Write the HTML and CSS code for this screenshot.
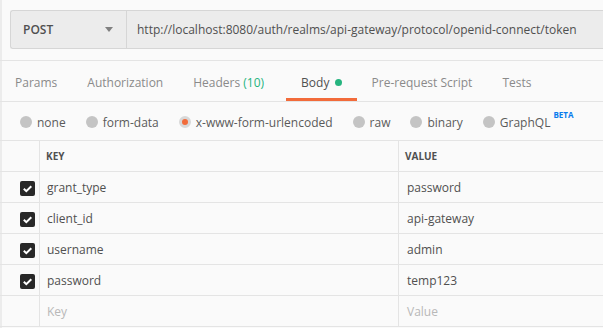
FILE: index.html
```html
<!DOCTYPE html>
<html lang="en">
<head>
    <meta charset="UTF-8">
    <title>Request</title>
    <link rel="stylesheet" href="styles.css">
</head>
<body>

<!-- Barra de la petición -->
<div class="request-bar">
    <div class="request-box">
        <div class="method">
            <span>POST</span>
            <span class="caret"></span>
        </div>
        <div class="url">http://localhost:8080/auth/realms/api-gateway/protocol/openid-connect/token</div>
    </div>
</div>

<!-- Pestañas -->
<div class="tabs">
    <div class="tab">Params</div>
    <div class="tab">Authorization</div>
    <div class="tab">Headers <span class="count">(10)</span></div>
    <div class="tab active">Body <span class="dot"></span></div>
    <div class="tab">Pre-request Script</div>
    <div class="tab">Tests</div>
</div>

<!-- Tipo de cuerpo -->
<div class="body-types">
    <label class="radio"><span class="circle"></span>none</label>
    <label class="radio"><span class="circle"></span>form-data</label>
    <label class="radio"><span class="circle selected"></span>x-www-form-urlencoded</label>
    <label class="radio"><span class="circle"></span>raw</label>
    <label class="radio"><span class="circle"></span>binary</label>
    <label class="radio"><span class="circle"></span>GraphQL<sup class="beta">BETA</sup></label>
</div>

<!-- Tabla de parámetros -->
<div class="params">
    <div class="row head">
        <div class="cell check"></div>
        <div class="cell">KEY</div>
        <div class="cell">VALUE</div>
    </div>
    <div class="row">
        <div class="cell check"><span class="box"><svg viewBox="0 0 15 15" width="15" height="15"><path d="M3.8 7.8l2.5 2.4 5-5" fill="none" stroke="#fff" stroke-width="2"/></svg></span></div>
        <div class="cell">grant_type</div>
        <div class="cell">password</div>
    </div>
    <div class="row">
        <div class="cell check"><span class="box"><svg viewBox="0 0 15 15" width="15" height="15"><path d="M3.8 7.8l2.5 2.4 5-5" fill="none" stroke="#fff" stroke-width="2"/></svg></span></div>
        <div class="cell">client_id</div>
        <div class="cell">api-gateway</div>
    </div>
    <div class="row">
        <div class="cell check"><span class="box"><svg viewBox="0 0 15 15" width="15" height="15"><path d="M3.8 7.8l2.5 2.4 5-5" fill="none" stroke="#fff" stroke-width="2"/></svg></span></div>
        <div class="cell">username</div>
        <div class="cell">admin</div>
    </div>
    <div class="row">
        <div class="cell check"><span class="box"><svg viewBox="0 0 15 15" width="15" height="15"><path d="M3.8 7.8l2.5 2.4 5-5" fill="none" stroke="#fff" stroke-width="2"/></svg></span></div>
        <div class="cell">password</div>
        <div class="cell">temp123</div>
    </div>
    <div class="row">
        <div class="cell check"></div>
        <div class="cell placeholder">Key</div>
        <div class="cell placeholder">Value</div>
    </div>
</div>

</body>
</html>
```

FILE: styles.css
```css
body {
    font-family: 'Open Sans', sans-serif;
    font-size: 12px;
    color: #505050;
    margin: 0;
    padding: 0;
    background-color: #fafafa;
    box-shadow: inset 2px 0 0 #ececec;
    min-height: 100vh;
}

/* Barra de la petición */
.request-bar {
    padding: 10px 0 11px 10px;
    border-bottom: 1px solid #e4e4e4;
}

.request-box {
    display: flex;
    height: 37px;
    background-color: #ececec;
    border: 1px solid #d6d6d6;
    border-right: none;
    border-radius: 3px 0 0 3px;
}

.method {
    flex-shrink: 0;
    width: 103px;
    padding-left: 12px;
    display: flex;
    align-items: center;
    justify-content: space-between;
    border-right: 1px solid #d6d6d6;
    font-weight: 600;
    color: #505050;
}

.caret {
    width: 0;
    height: 0;
    border-left: 4px solid transparent;
    border-right: 4px solid transparent;
    border-top: 5px solid #808080;
    margin-right: 13px;
}

.url {
    display: flex;
    align-items: center;
    padding-left: 10px;
    white-space: nowrap;
    color: #505050;
}

/* Pestañas */
.tabs {
    display: flex;
    border-bottom: 1px solid #e4e4e4;
}

.tab {
    height: 37px;
    padding: 0 15px;
    line-height: 44px;
    color: #8a8a8a;
    border-bottom: 3px solid transparent;
    white-space: nowrap;
}

.tab.active {
    color: #505050;
    border-bottom-color: #f26b3a;
    margin-left: 7px;
}

.count {
    color: #26b47f;
}

.dot {
    display: inline-block;
    width: 7px;
    height: 7px;
    border-radius: 50%;
    background-color: #26b47f;
    margin-left: 2px;
    vertical-align: 1px;
}

/* Tipo de cuerpo */
.body-types {
    display: flex;
    align-items: center;
    height: 38px;
    padding-left: 20px;
    gap: 20px;
}

.radio {
    display: flex;
    align-items: center;
    color: #5a5a5a;
    white-space: nowrap;
    position: relative;
    top: 1px;
}

.circle {
    width: 12px;
    height: 12px;
    border-radius: 50%;
    background-color: #c4c4c4;
    margin-right: 5px;
    box-sizing: border-box;
}

.circle.selected {
    background-color: #f26b3a;
    border: 3px solid #d8d8d8;
}

.beta {
    font-size: 8px;
    font-weight: 700;
    color: #097bed;
    margin-left: 3px;
    position: relative;
    top: -8px;
}

/* Tabla de parámetros */
.params {
    border-top: 1px solid #e4e4e4;
}

.row {
    display: grid;
    grid-template-columns: 40px 359px 1fr;
    height: 30px;
    border-bottom: 1px solid #e4e4e4;
}

.cell {
    display: flex;
    align-items: center;
    padding-left: 7px;
    border-right: 1px solid #e4e4e4;
    white-space: nowrap;
}

.cell:last-child {
    border-right: none;
    padding-left: 8px;
}

.row.head .cell {
    font-size: 10px;
    font-weight: 700;
    color: #505050;
    padding-left: 6px;
}

.cell.check {
    padding-left: 20px;
}

.box {
    width: 15px;
    height: 15px;
    border-radius: 2px;
    background-color: #282828;
    display: flex;
    margin-top: 2px;
}

.placeholder {
    color: #b8b8b8;
}
```
